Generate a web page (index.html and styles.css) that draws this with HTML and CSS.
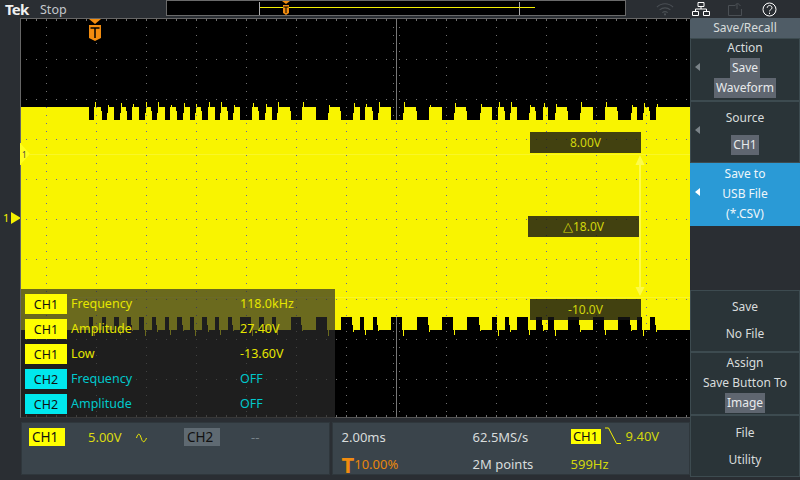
FILE: index.html
```html
<!DOCTYPE html>
<html lang="en">
  <head>
    <meta charset="UTF-8" />
    <title>Save/Recall</title>
    <link rel="stylesheet" href="styles.css">
  </head>
  <body>
    <header class="topbar">
      <span class="logo">Tek</span>
      <span class="run-state">Stop</span>
      <div class="record-view">
        <span class="record-window"></span>
        <svg class="record-trigger" width="8" height="15" viewBox="0 0 8 15">
          <path d="M0 0h8L4 3z" fill="#f28c0f" />
          <path d="M1 4h6l0 8-3 2-3-2z" fill="#f28c0f" />
          <path d="M1.5 6h5M4 6v6" stroke="#000" fill="none" />
        </svg>
      </div>
      <div class="status-icons">
        <svg width="18" height="14" viewBox="0 0 20 14" fill="none" stroke="#4a4f54" stroke-width="1.2">
          <path d="M1 5c5-5 13-5 18 0M4 8c3.500-3 8.500-3 12 0M7 11c2-1.500 4-1.500 6 0" />
          <circle cx="10" cy="13" r="0.6" />
        </svg>
        <svg width="18" height="14" viewBox="0 0 18 14" fill="none" stroke="#fff">
          <path d="M6 .5h6v4H6zM.5 9.500h6v4h-6zM11.500 9.500h6v4h-6zM9 4.500v2.500M3.500 9.500V7h11v2.500" />
        </svg>
        <svg width="16" height="14" viewBox="0 0 16 14" fill="none" stroke="#4a4f54">
          <path d="M7 3.500H.5v10h13V7M9 7l0-5M6.500 4L9.500 1l3 3" />
        </svg>
        <svg width="15" height="15" viewBox="0 0 15 15" fill="none" stroke="#fff">
          <circle cx="7.500" cy="7.500" r="6.500" />
          <path d="M5.200 5.800c0-3 4.800-3 4.800 0 0 1.800-2.500 1.800-2.500 3.600M7.500 10.600v1.400" />
        </svg>
      </div>
    </header>

    <div class="main">
      <div class="scope">
        <div class="ground-marker"><span>1</span><i></i></div>

        <div class="plot">
          <svg id="trace" width="670" height="400" viewBox="20 18 670 400"></svg>

          <div class="cursor-box cursor-top">8.00V</div>
          <div class="cursor-box cursor-delta"><span class="delta">△</span>18.0V</div>
          <div class="cursor-box cursor-bottom">-10.0V</div>

          <svg class="trigger-flag" width="14" height="23" viewBox="0 0 14 23">
            <path d="M1 0h12L7 5z" fill="#f28c0f" />
            <path d="M1 6h12v13l-6 3L1 19z" fill="#f28c0f" />
            <path d="M2.500 9h9M7 9v10" stroke="#000" stroke-width="1.500" fill="none" />
          </svg>

          <div class="measurements">
            <div class="meas-row ch1"><span class="chip">CH1</span><span class="meas-name">Frequency</span><span>118.0kHz</span></div>
            <div class="meas-row ch1"><span class="chip">CH1</span><span class="meas-name">Amplitude</span><span>27.40V</span></div>
            <div class="meas-row ch1"><span class="chip">CH1</span><span class="meas-name">Low</span><span>-13.60V</span></div>
            <div class="meas-row ch2"><span class="chip">CH2</span><span class="meas-name">Frequency</span><span>OFF</span></div>
            <div class="meas-row ch2"><span class="chip">CH2</span><span class="meas-name">Amplitude</span><span>OFF</span></div>
          </div>
        </div>

        <div class="readouts">
          <div class="panel channels">
            <span class="tag tag-ch1">CH1</span>
            <span class="ch-scale">5.00V</span>
            <svg class="ac-icon" width="11" height="10" viewBox="0 0 11 10" fill="none" stroke="#f4f000">
              <path d="M.5 5C2 0 3.500 0 5 4.500 6.500 10 8.500 10 10.500 5" />
            </svg>
            <span class="tag tag-ch2">CH2</span>
            <span class="ch-off">--</span>
          </div>
          <div class="panel timebase">
            <div class="tb-col tb-horizontal">
              <span>2.00ms</span>
              <span class="trigger-pos"><b>T</b>10.00%</span>
            </div>
            <div class="tb-col tb-rate">
              <span>62.5MS/s</span>
              <span>2M points</span>
            </div>
            <div class="tb-col tb-trigger">
              <span class="trigger-line">
                <span class="tag tag-small">CH1</span>
                <svg width="17" height="18" viewBox="0 0 17 18" fill="none" stroke="#f4f000">
                  <path d="M0 1h3.500l8 15.500H16" />
                </svg>
                <span>9.40V</span>
              </span>
              <span>599Hz</span>
            </div>
          </div>
        </div>
      </div>

      <aside class="menu">
        <div class="menu-title">Save/Recall</div>
        <div class="menu-item has-arrow first">
          <span>Action</span>
          <span class="value">Save</span>
          <span class="value">Waveform</span>
        </div>
        <div class="menu-item has-arrow spaced">
          <span>Source</span>
          <span class="value">CH1</span>
        </div>
        <div class="menu-item has-arrow selected">
          <span>Save to</span>
          <span>USB File</span>
          <span>(*.CSV)</span>
        </div>
        <div class="menu-gap"></div>
        <div class="menu-item spaced">
          <span>Save</span>
          <span>No File</span>
        </div>
        <div class="menu-item">
          <span>Assign</span>
          <span>Save Button To</span>
          <span class="value">Image</span>
        </div>
        <div class="menu-item spaced last">
          <span>File</span>
          <span>Utility</span>
        </div>
      </aside>
    </div>

    <script src="wave.js"></script>
  </body>
</html>
```

FILE: styles.css
```css
* {
  margin: 0;
  padding: 0;
  box-sizing: border-box;
}

body {
  width: 800px;
  height: 480px;
  overflow: hidden;
  background-color: #2a2e33;
  color: #d8dcdc;
  font-family: "Noto Sans", sans-serif;
  font-size: 12px;
}

.topbar {
  display: flex;
  align-items: center;
  height: 18px;
  padding-left: 5px;
}

.logo {
  width: 35px;
  color: #f0f0f0;
  font-size: 15px;
  font-weight: 700;
  line-height: 16px;
  letter-spacing: -0.8px;
}

.run-state {
  width: 126px;
  color: #c4c8cc;
  font-size: 12.500px;
}

.record-view {
  position: relative;
  width: 460px;
  height: 16px;
  align-self: flex-start;
  background-color: #000;
  border: 1px solid #6a6a6a;
}

.record-window {
  position: absolute;
  left: 92px;
  top: 1px;
  width: 261px;
  height: 13px;
  border-left: 1px solid #aaa;
  border-right: 1px solid #aaa;
}

.record-window::before {
  content: "";
  position: absolute;
  left: 0;
  width: 275px;
  top: 5px;
  height: 1px;
  background-color: #f4f000;
}

.record-trigger {
  position: absolute;
  left: 115px;
  top: 0;
}

.status-icons {
  display: flex;
  align-items: center;
  gap: 18px;
  margin-left: 30px;
  height: 18px;
}

.main {
  display: flex;
  height: 462px;
}

.scope {
  position: relative;
  width: 690px;
  padding-left: 20px;
}

.plot {
  position: relative;
  width: 670px;
  height: 400px;
  overflow: hidden;
}

#trace {
  display: block;
}

.ground-marker {
  position: absolute;
  left: 3px;
  top: 194px;
  display: flex;
  align-items: center;
  gap: 2px;
  color: #f4f000;
  font-size: 11px;
  line-height: 12px;
}

.ground-marker i {
  width: 0;
  height: 0;
  border-left: 10px solid #f4f000;
  border-top: 6px solid transparent;
  border-bottom: 6px solid transparent;
}

.cursor-box {
  position: absolute;
  width: 111px;
  height: 21px;
  background-color: rgba(20, 20, 20, 0.8);
  color: #d2d60c;
  text-align: center;
  line-height: 21px;
}

.cursor-top {
  left: 510px;
  top: 114px;
}

.cursor-delta {
  left: 508px;
  top: 198px;
}

.cursor-bottom {
  left: 510px;
  top: 281px;
}

.delta {
  font-size: 13px;
}

.trigger-flag {
  position: absolute;
  left: 68px;
  top: 1px;
}

.measurements {
  position: absolute;
  left: 1px;
  top: 271px;
  width: 314px;
  height: 129px;
  padding: 2px 0 0 4px;
  background-color: rgba(43, 43, 43, 0.69);
  font-size: 12.500px;
}

.meas-row {
  display: flex;
  align-items: center;
  height: 25px;
}

.meas-name {
  width: 169px;
  margin-left: 4px;
}

.chip {
  width: 42px;
  height: 20px;
  color: #111;
  text-align: center;
  line-height: 21px;
}

.ch1 {
  color: #e6e600;
}

.ch1 .chip {
  background-color: #ffff00;
}

.ch2 {
  color: #00c8cc;
}

.ch2 .chip {
  background-color: #00e8ee;
}

.readouts {
  display: flex;
  gap: 2px;
  padding: 4px 0 5px 1px;
  height: 62px;
}

.panel {
  display: flex;
  background-color: #3a444b;
  border: 1px solid #2f373c;
  font-size: 13px;
}

.channels {
  width: 309px;
  align-items: flex-start;
  padding: 5px 0 0 7px;
}

.tag {
  height: 18px;
  padding: 0 3px;
  line-height: 18px;
  color: #111;
  font-size: 13.500px;
}

.tag-ch1 {
  width: 36px;
  background-color: #ffff00;
}

.ch-scale {
  width: 48px;
  margin-left: 23px;
  color: #dcdc10;
  line-height: 18px;
}

.ac-icon {
  margin-top: 5px;
}

.tag-ch2 {
  width: 36px;
  margin-left: 37px;
  background-color: #5f6a72;
}

.ch-off {
  margin-left: 31px;
  color: #78838a;
  line-height: 18px;
}

.timebase {
  width: 359px;
  padding: 5px 0 0 9px;
}

.tb-col {
  display: flex;
  flex-direction: column;
  gap: 9px;
  line-height: 18px;
}

.tb-horizontal {
  width: 131px;
}

.tb-rate {
  width: 98px;
}

.tb-trigger {
  color: #d2d60c;
}

.trigger-pos {
  display: flex;
  align-items: flex-end;
  color: #e8870c;
}

.trigger-pos b {
  font-size: 22px;
  font-weight: 700;
  line-height: 18px;
  color: #f28c0f;
}

.trigger-line {
  display: flex;
  align-items: center;
  gap: 4px;
  margin-top: -1px;
  margin-bottom: 1px;
}

.tag-small {
  width: 30px;
  height: 15px;
  padding: 0;
  background-color: #ffff00;
  text-align: center;
  line-height: 15px;
  font-size: 13px;
}

.menu {
  display: flex;
  flex-direction: column;
  width: 110px;
  text-align: center;
}

.menu-title {
  height: 20px;
  background-color: #4f5c66;
  line-height: 20px;
  border-radius: 2px 0 0 0;
}

.menu-item {
  position: relative;
  display: flex;
  flex-direction: column;
  align-items: center;
  justify-content: center;
  height: 62.500px;
  background-color: #2a3438;
  border: 1px solid #3d4b50;
  line-height: 20px;
}

.menu-item.first {
  padding-bottom: 2px;
}

.menu-item.last {
  padding-top: 2px;
}

.menu-item.spaced {
  gap: 7px;
}

.menu-item.has-arrow::before {
  content: "";
  position: absolute;
  left: 4px;
  top: 24px;
  border-right: 5px solid #7a8388;
  border-top: 4px solid transparent;
  border-bottom: 4px solid transparent;
}

.menu-item.selected {
  background-color: #2a9ad6;
  border-color: #2a9ad6;
  color: #eef6fa;
}

.menu-item.selected::before {
  border-right-color: #fff;
}

.menu-gap {
  height: 64px;
}

.value {
  padding: 0 2px;
  background-color: #5f6670;
  color: #e8eaec;
}
```

FILE: wave.js
```js
// Notches in the CH1 envelope, as [start, end] in page pixels
const notches = [
  [89, 94], [102, 107], [114, 120], [127, 132], [139, 145], [152, 157],
  [165, 170], [177, 183], [190, 195], [202, 208], [215, 220], [228, 233],
  [240, 252], [259, 265], [272, 277], [291, 302], [316, 328], [341, 353],
  [360, 365], [373, 378], [391, 403], [417, 429], [442, 454], [467, 480],
  [492, 498], [505, 510], [517, 529], [536, 543], [548, 555], [568, 580],
  [593, 605], [618, 631], [637, 643], [650, 656],
];

const LEFT = 20;
const RIGHT = 690;

function buildWave() {
  let top = `M${LEFT} 107`;
  notches.forEach(([a, b], i) => {
    // shoulder before the drop, then the notch floor
    const shoulder = i % 2 ? 111 : 107;
    top += `H${a - 1}V${shoulder}H${a}V120H${b}`;
    // stepped rising edge with a spike
    const spike = [102, 105, 103, 104, 102][i % 5];
    top += `V${i % 3 ? 113 : 107}H${b + 1}V${spike}H${b + 2}V107`;
  });
  top += `H${RIGHT}V330`;

  let bottom = "";
  for (let i = notches.length - 1; i >= 0; i--) {
    const [a, b] = notches[i];
    const drop = [336, 332, 335, 331][i % 4];
    bottom += `H${b + 1}V${drop}H${b}V${i % 2 ? 325 : 330}H${b - 1}V317H${a}V330`;
  }
  bottom += `H${LEFT}Z`;
  return top + bottom;
}

// Grid dots: every 50px across with 8px steps, every 40px down with 10px steps
function buildDots() {
  let d = "";
  const dot = (x, y, h = 1) => {
    d += `M${x} ${y}h1v${h}h-1z`;
  };
  for (let x = 46; x < RIGHT; x += 50) {
    for (let y = 19; y < 418; y += 8) dot(x, y);
  }
  for (let y = 59; y < 418; y += 40) {
    for (let x = 26; x < RIGHT; x += 10) dot(x, y);
  }
  return d;
}

// Frame ticks and the pairs beside the centre line, seen on black only
function buildTicks() {
  let d = "";
  for (let x = 26; x < RIGHT; x += 10) {
    d += `M${x} 19h1v2h-1zM${x} 415h1v2h-1z`;
  }
  for (let y = 27; y < 418; y += 8) {
    d += `M393 ${y}h1v1h-1zM399 ${y}h1v1h-1z`;
  }
  return d;
}

const wave = buildWave();
const dots = buildDots();

document.getElementById("trace").innerHTML = `
  <defs><clipPath id="waveClip"><path d="${wave}" /></clipPath></defs>
  <rect x="20" y="18" width="670" height="400" fill="#000" />
  <path d="${dots}" fill="#707070" shape-rendering="crispEdges" />
  <path d="${buildTicks()}" fill="#707070" shape-rendering="crispEdges" />
  <rect x="396" y="18" width="1" height="400" fill="#777" />
  <path d="${wave}" fill="#f9f400" shape-rendering="crispEdges" />
  <path d="${dots}" fill="#6464a8" clip-path="url(#waveClip)" shape-rendering="crispEdges" />
  <rect x="30" y="154" width="660" height="1" fill="#f9f628" />
  <rect x="20" y="297" width="670" height="1" fill="#f9f628" />
  <path d="M640 162V290" stroke="#fdfb4a" stroke-width="2" />
  <path d="M635.500 165L640 155L644.500 165ZM635.500 287L640 296L644.500 287Z" fill="#fdfb4a" />
  <path d="M20 143L30 154L20 165Z" fill="#ffff1e" />
  <text x="22" y="158" font-size="8" fill="#444" font-family="Noto Sans">1</text>
  <rect x="20" y="18" width="670" height="1" fill="#666" />
  <rect x="20" y="18" width="1" height="125" fill="#666" />
  <rect x="20" y="165" width="1" height="253" fill="#666" />
  <rect x="20" y="417" width="670" height="1" fill="#555" />
`;
```
